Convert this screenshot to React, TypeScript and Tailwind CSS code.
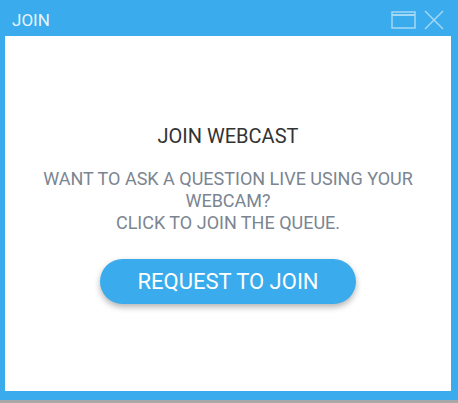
import React from "react";

const App = () => {
  return (
    <div className="w-[458px] h-[403px] bg-[#a8a8a8] font-['Roboto',sans-serif]">
      <div className="w-[458px] h-[400px] bg-[#3aabec] flex flex-col">
        <div className="h-[36px] flex items-center justify-between pl-[12px] pr-[14px]">
          <span className="text-[17px] text-[#e6f4fd] font-normal leading-none pt-[5px]">JOIN</span>
          <div className="flex items-center gap-[8px] pt-[4px]">
            <svg width="25" height="18" viewBox="0 0 25 18" fill="none" stroke="#a4d9f6" strokeWidth="1.5">
              <rect x="1" y="1" width="23" height="16" />
              <line x1="1" y1="4" x2="24" y2="4" strokeWidth="2" />
            </svg>
            <svg width="20" height="20" viewBox="0 0 20 20" fill="none" stroke="#a4d9f6" strokeWidth="1.5">
              <line x1="1" y1="1" x2="19" y2="19" />
              <line x1="19" y1="1" x2="1" y2="19" />
            </svg>
          </div>
        </div>
        <div className="ml-[5px] mr-[7px] h-[355px] bg-white flex flex-col items-center pt-[88px]">
          <h1 className="text-[20px] text-[#333333] leading-[24px]">JOIN WEBCAST</h1>
          <p className="mt-[20px] text-[18px] text-[#7b8591] leading-[22px] text-center w-[420px]">
            WANT TO ASK A QUESTION LIVE USING YOUR WEBCAM?
            <br />
            CLICK TO JOIN THE QUEUE.
          </p>
          <button className="mt-[25px] w-[256px] h-[45px] rounded-full bg-[#3aabec] text-white text-[22px] shadow-[0_3px_6px_rgba(0,0,0,0.3)]">
            REQUEST TO JOIN
          </button>
        </div>
      </div>
    </div>
  );
};

export default App;
